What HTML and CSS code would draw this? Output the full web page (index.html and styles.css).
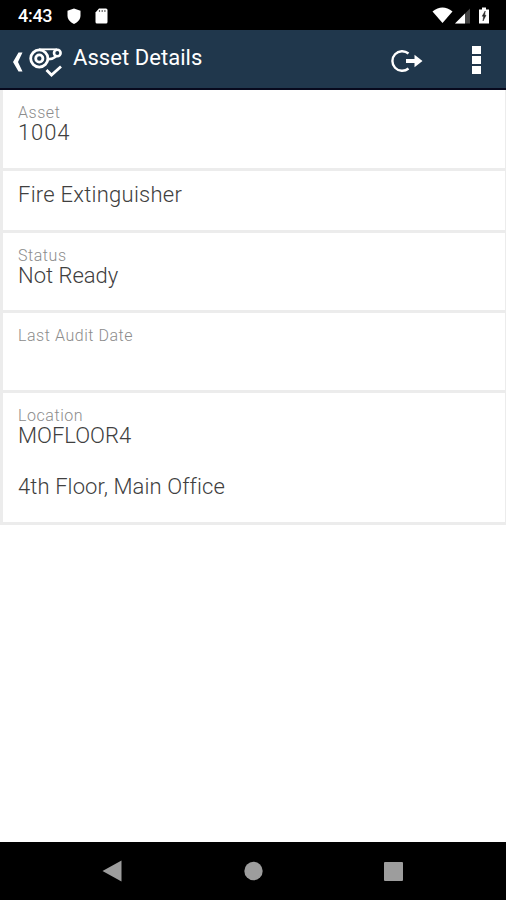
FILE: index.html
```
<!DOCTYPE html>
<html lang="en">
<head>
    <meta charset="UTF-8">
    <meta name="viewport" content="width=device-width, initial-scale=1.0">
    <title>Asset Details</title>
    <link rel="stylesheet" href="styles.css">
</head>
<body>
    <div class="app">
        <div class="status-bar">
            <span class="clock">4:43</span>
            <svg class="status-left" width="46" height="20" viewBox="0 0 46 20">
                <path d="M8 2.5 L14.5 4.8 V9.5 C14.5 13.5 11.8 16.3 8 17.9 C4.2 16.3 1.5 13.5 1.5 9.5 V4.8 Z" fill="#fff"/>
                <path d="M33 2.5 H40 Q41.5 2.5 41.5 4 V16 Q41.5 17.5 40 17.5 H31 Q29.5 17.5 29.5 16 V6.5 Z" fill="#fff"/>
                <path d="M33.5 4 V6 M36.2 4 V6 M38.9 4 V6" stroke="#666" stroke-width="1.2"/>
            </svg>
            <svg class="status-right" width="60" height="20" viewBox="0 0 60 20">
                <path d="M0.5 5.5 Q10.5 -2.5 20.5 5.5 L10.5 17 Z" fill="#fff"/>
                <path d="M38 2.5 V17.5 H23 Z" fill="#444"/>
                <path d="M33 7.5 V17.5 H23 Z" fill="#fff"/>
                <path d="M50 3.5 V1.5 H54 V3.5 H57 V17.5 H47 V3.5 Z" fill="#fff"/>
                <path d="M53.2 5 L50.2 10.2 H51.6 L51 15 L54 9.2 H52.6 Z" fill="#222" stroke="#222" stroke-width="0.5"/>
            </svg>
        </div>

        <div class="toolbar">
            <svg class="back" width="70" height="58" viewBox="0 0 70 58">
                <path d="M22.5 22.5 H18.5 L13 32 L18.5 41.5 H22.5 L18 32 Z" fill="#fff"/>
                <g fill="none" stroke="#fff">
                    <circle cx="39.3" cy="28.5" r="8.6" stroke-width="2.8"/>
                    <circle cx="39.3" cy="28.5" r="3.6" stroke-width="2.8"/>
                    <path d="M39 19.3 H57" stroke-width="1.8"/>
                    <circle cx="57.3" cy="23" r="3.3" stroke-width="2.6"/>
                    <path d="M48.5 29.3 Q53 29 56 26.5" stroke-width="2.4"/>
                    <path d="M46.5 40 L51.5 45 L61 36.5" stroke-width="2.8"/>
                </g>
            </svg>
            <h1 class="title">Asset Details</h1>
            <svg class="action" width="36" height="32" viewBox="0 0 36 32">
                <path d="M18.5 8.5 A9.8 9.8 0 1 0 18.5 23.5" fill="none" stroke="#fff" stroke-width="2.4"/>
                <path d="M16 14 H24.5 V9.8 L32.5 16 L24.5 22.2 V18 H16 Z" fill="#fff"/>
            </svg>
            <div class="menu">
                <span></span>
                <span></span>
                <span></span>
            </div>
        </div>

        <div class="details">
            <div class="row row-asset">
                <div class="label">Asset</div>
                <div class="value number">1004</div>
            </div>
            <div class="row row-description">
                <div class="value description">Fire Extinguisher</div>
            </div>
            <div class="row">
                <div class="label">Status</div>
                <div class="value">Not Ready</div>
            </div>
            <div class="row">
                <div class="label">Last Audit Date</div>
            </div>
            <div class="row row-location">
                <div class="label">Location</div>
                <div class="value">MOFLOOR4</div>
                <div class="value place">4th Floor, Main Office</div>
            </div>
        </div>

        <div class="nav-bar">
            <svg width="506" height="58" viewBox="0 0 506 58" fill="#9d9d9d">
                <path d="M102.5 29 L121.5 18.5 V39.5 Z"/>
                <circle cx="253.5" cy="29" r="9.2"/>
                <rect x="384" y="20" width="19" height="19" rx="1"/>
            </svg>
        </div>
    </div>
</body>
</html>
```
FILE: styles.css
```
* {
    box-sizing: border-box;
}

body {
    margin: 0;
    background-color: #fff;
    font-family: Roboto, sans-serif;
}

.app {
    display: flex;
    flex-direction: column;
    width: 506px;
    height: 900px;
}

.status-bar {
    display: flex;
    align-items: center;
    height: 30px;
    padding: 1px 14px 0 18px;
    background-color: #000;
    color: #fff;
}

.clock {
    width: 48px;
    font-size: 18px;
    font-weight: 500;
    letter-spacing: -0.3px;
}

.status-right {
    margin-left: auto;
}

.toolbar {
    display: flex;
    align-items: center;
    height: 60px;
    background-color: #20374c;
    border-bottom: 2px solid #07091d;
    color: #fff;
}

.back {
    flex: none;
}

.title {
    margin: 0 0 2px 3px;
    font-size: 22px;
    font-weight: 400;
    line-height: 28px;
    letter-spacing: 0.05px;
}

.action {
    margin: 3px 0 0 auto;
}

.menu {
    display: flex;
    flex-direction: column;
    gap: 2px;
    margin: 2px 25px 0 46px;
}

.menu span {
    width: 9px;
    height: 8px;
    background-color: #fff;
}

.details {
    border-left: 3px solid #ececec;
    border-right: 1px solid #ececec;
}

.row {
    height: 80px;
    padding: 14px 15px 0;
    border-bottom: 3px solid #ececec;
}

.row-asset {
    height: 81px;
}

.row-description {
    height: 62px;
    padding-top: 12px;
}

.row-location {
    height: 132px;
}

.label {
    color: #8c8c8c;
    font-size: 16px;
    font-weight: 300;
    line-height: 18px;
    letter-spacing: 0.55px;
}

.value {
    color: #404040;
    font-size: 22px;
    font-weight: 300;
    line-height: 22px;
}

.number {
    letter-spacing: 0.9px;
}

.description {
    line-height: 24px;
    letter-spacing: 0.25px;
}

.place {
    margin-top: 29px;
    letter-spacing: 0.1px;
}

.nav-bar {
    height: 58px;
    margin-top: auto;
    background-color: #000;
}
```
